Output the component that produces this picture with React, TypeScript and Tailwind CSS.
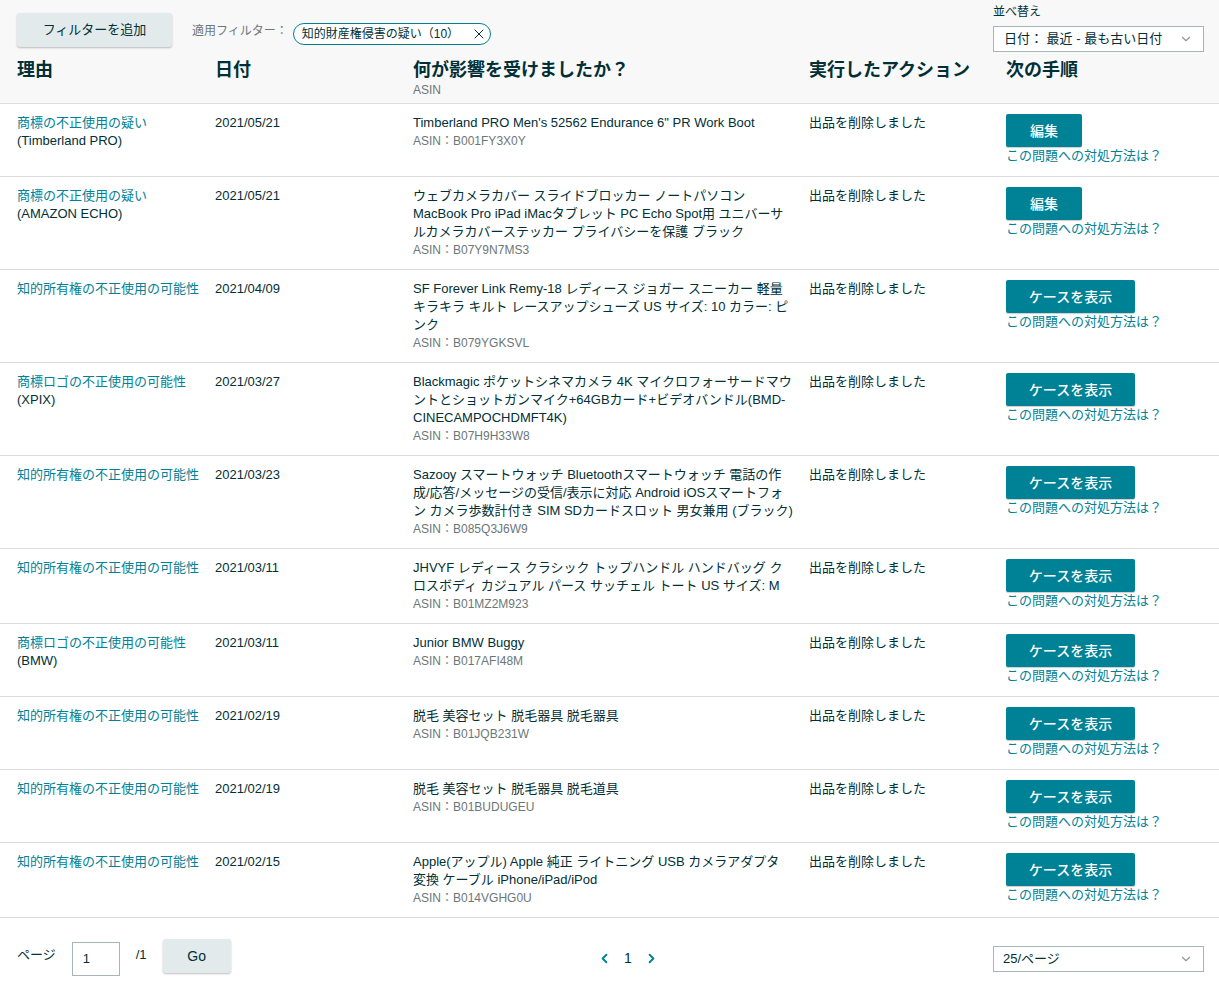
import { ChevronDown, ChevronLeft, ChevronRight, X } from "lucide-react";

type Row = {
  reason: string;
  brand?: string;
  date: string;
  product: string;
  asin: string;
  action: string;
};

const rows: Row[] = [
  {
    reason: "商標の不正使用の疑い",
    brand: "(Timberland PRO)",
    date: "2021/05/21",
    product: "Timberland PRO Men's 52562 Endurance 6\" PR Work Boot",
    asin: "B001FY3X0Y",
    action: "編集",
  },
  {
    reason: "商標の不正使用の疑い",
    brand: "(AMAZON ECHO)",
    date: "2021/05/21",
    product:
      "ウェブカメラカバー スライドブロッカー ノートパソコン MacBook Pro iPad iMacタブレット PC Echo Spot用 ユニバーサルカメラカバーステッカー プライバシーを保護 ブラック",
    asin: "B07Y9N7MS3",
    action: "編集",
  },
  {
    reason: "知的所有権の不正使用の可能性",
    date: "2021/04/09",
    product:
      "SF Forever Link Remy-18 レディース ジョガー スニーカー 軽量 キラキラ キルト レースアップシューズ US サイズ: 10 カラー: ピンク",
    asin: "B079YGKSVL",
    action: "ケースを表示",
  },
  {
    reason: "商標ロゴの不正使用の可能性",
    brand: "(XPIX)",
    date: "2021/03/27",
    product:
      "Blackmagic ポケットシネマカメラ 4K マイクロフォーサードマウントとショットガンマイク+64GBカード+ビデオバンドル(BMD-CINECAMPOCHDMFT4K)",
    asin: "B07H9H33W8",
    action: "ケースを表示",
  },
  {
    reason: "知的所有権の不正使用の可能性",
    date: "2021/03/23",
    product:
      "Sazooy スマートウォッチ Bluetoothスマートウォッチ 電話の作成/応答/メッセージの受信/表示に対応 Android iOSスマートフォン カメラ歩数計付き SIM SDカードスロット 男女兼用 (ブラック)",
    asin: "B085Q3J6W9",
    action: "ケースを表示",
  },
  {
    reason: "知的所有権の不正使用の可能性",
    date: "2021/03/11",
    product:
      "JHVYF レディース クラシック トップハンドル ハンドバッグ クロスボディ カジュアル パース サッチェル トート US サイズ: M",
    asin: "B01MZ2M923",
    action: "ケースを表示",
  },
  {
    reason: "商標ロゴの不正使用の可能性",
    brand: "(BMW)",
    date: "2021/03/11",
    product: "Junior BMW Buggy",
    asin: "B017AFI48M",
    action: "ケースを表示",
  },
  {
    reason: "知的所有権の不正使用の可能性",
    date: "2021/02/19",
    product: "脱毛 美容セット 脱毛器具 脱毛器具",
    asin: "B01JQB231W",
    action: "ケースを表示",
  },
  {
    reason: "知的所有権の不正使用の可能性",
    date: "2021/02/19",
    product: "脱毛 美容セット 脱毛器具 脱毛道具",
    asin: "B01BUDUGEU",
    action: "ケースを表示",
  },
  {
    reason: "知的所有権の不正使用の可能性",
    date: "2021/02/15",
    product:
      "Apple(アップル) Apple 純正 ライトニング USB カメラアダプタ 変換 ケーブル iPhone/iPad/iPod",
    asin: "B014VGHG0U",
    action: "ケースを表示",
  },
];

const font = "font-['Liberation_Sans','Noto_Sans_CJK_JP',sans-serif]";
const cols = "grid grid-cols-[198px_198px_396px_197px_1fr]";

export default function App() {
  return (
    <div className={`${font} w-[1219px] min-h-[989px] bg-white text-[13px] leading-[18px] text-[#0f1111]`}>
      {/* Filters + column headers */}
      <div className="bg-[#f8f8f8] border-b border-[#dddddd] pl-[17px] pr-[15px]">
        <div className="flex justify-between">
          <div className="flex items-start pt-[13px]">
            <button className="w-[155px] h-[34px] rounded-[3px] bg-[#e3eaec] text-[13px] text-[#002f36] shadow-[0_1px_2px_rgba(0,0,0,0.25)]">
              フィルターを追加
            </button>
            <span className="ml-5 mt-[9px] text-[12px] text-[#6c7778]">適用フィルター：</span>
            <span className="ml-[5px] mt-[10px] flex h-[22px] items-center gap-[12px] rounded-full border border-[#008296] bg-white pl-[8px] pr-[3px] text-[12px] text-[#002f36]">
              知的財産権侵害の疑い（10）
              <X size={16} strokeWidth={1.5} className="text-[#002f36]" />
            </span>
          </div>
          <div className="pt-[4px] w-[211px]">
            <div className="text-[12px] leading-[16px] text-[#002f36]">並べ替え</div>
            <div className="mt-[6px] flex h-[26px] items-center justify-between border border-[#a6b5b7] bg-white pl-[10px] pr-[10px] text-[13px] text-[#002f36]">
              日付： 最近 - 最も古い日付
              <ChevronDown size={14} strokeWidth={2} className="text-[#8c9a9c]" />
            </div>
          </div>
        </div>
        <div className={`${cols} pt-[8px] pb-[5px] text-[#002f36]`}>
          <div className="text-[18px] font-bold leading-[20px]">理由</div>
          <div className="text-[18px] font-bold leading-[20px]">日付</div>
          <div>
            <div className="text-[18px] font-bold leading-[20px]">何が影響を受けましたか？</div>
            <div className="mt-[2px] text-[12px] leading-[16px] text-[#6c7778]">ASIN</div>
          </div>
          <div className="text-[18px] font-bold leading-[20px]">実行したアクション</div>
          <div className="text-[18px] font-bold leading-[20px]">次の手順</div>
        </div>
      </div>

      {/* Rows */}
      {rows.map((r, i) => (
        <div key={i} className={`${cols} border-b border-[#dddddd] pl-[17px] pt-[10px] pb-[10px]`}>
          <div className="pr-2">
            <div className="text-[#008296]">{r.reason}</div>
            {r.brand && <div className="text-[#002f36]">{r.brand}</div>}
          </div>
          <div className="text-[#002f36]">{r.date}</div>
          <div className="pr-[14px] text-[#002f36]">
            <div>{r.product}</div>
            <div className="text-[12px] text-[#6c7778]">ASIN：{r.asin}</div>
          </div>
          <div className="text-[#002f36]">出品を削除しました</div>
          <div className="pb-px">
            <button
              className={`flex h-[33px] items-center justify-center rounded-[2px] bg-[#008296] text-[14px] font-medium text-white shadow-[0_1px_1px_rgba(0,0,0,0.2)] ${
                r.action === "編集" ? "w-[76px]" : "w-[129px]"
              }`}
            >
              {r.action}
            </button>
            <div className="text-[#008296]">この問題への対処方法は？</div>
          </div>
        </div>
      ))}

      {/* Pagination */}
      <div className="flex items-start pl-[17px] pr-[15px] pt-[21px]">
        <div className="flex w-[580px] items-start text-[#002f36]">
          <span className="mt-[7px] text-[13px]">ページ</span>
          <div className="ml-[16px] mt-[3px] flex h-[34px] w-[48px] items-center border border-[#a6b5b7] pl-[10px] text-[13px]">1</div>
          <span className="ml-4 mt-[7px] text-[13px]">/1</span>
          <button className="ml-4 h-[34px] w-[68px] rounded-[3px] bg-[#e3eaec] text-[14px] shadow-[0_1px_2px_rgba(0,0,0,0.25)]">
            Go
          </button>
        </div>
        <div className="mt-[10px] flex w-[396px] items-center gap-[12px] text-[#002f36]">
          <ChevronLeft size={15} strokeWidth={3} className="text-[#008296]" />
          <span className="text-[14px] font-medium">1</span>
          <ChevronRight size={15} strokeWidth={3} className="text-[#008296]" />
        </div>
        <div className="ml-auto mt-[7px] flex h-[26px] w-[211px] items-center justify-between border border-[#a6b5b7] bg-white pl-[9px] pr-[10px] text-[13px] text-[#002f36]">
          25/ページ
          <ChevronDown size={14} strokeWidth={2} className="text-[#8c9a9c]" />
        </div>
      </div>
    </div>
  );
}
